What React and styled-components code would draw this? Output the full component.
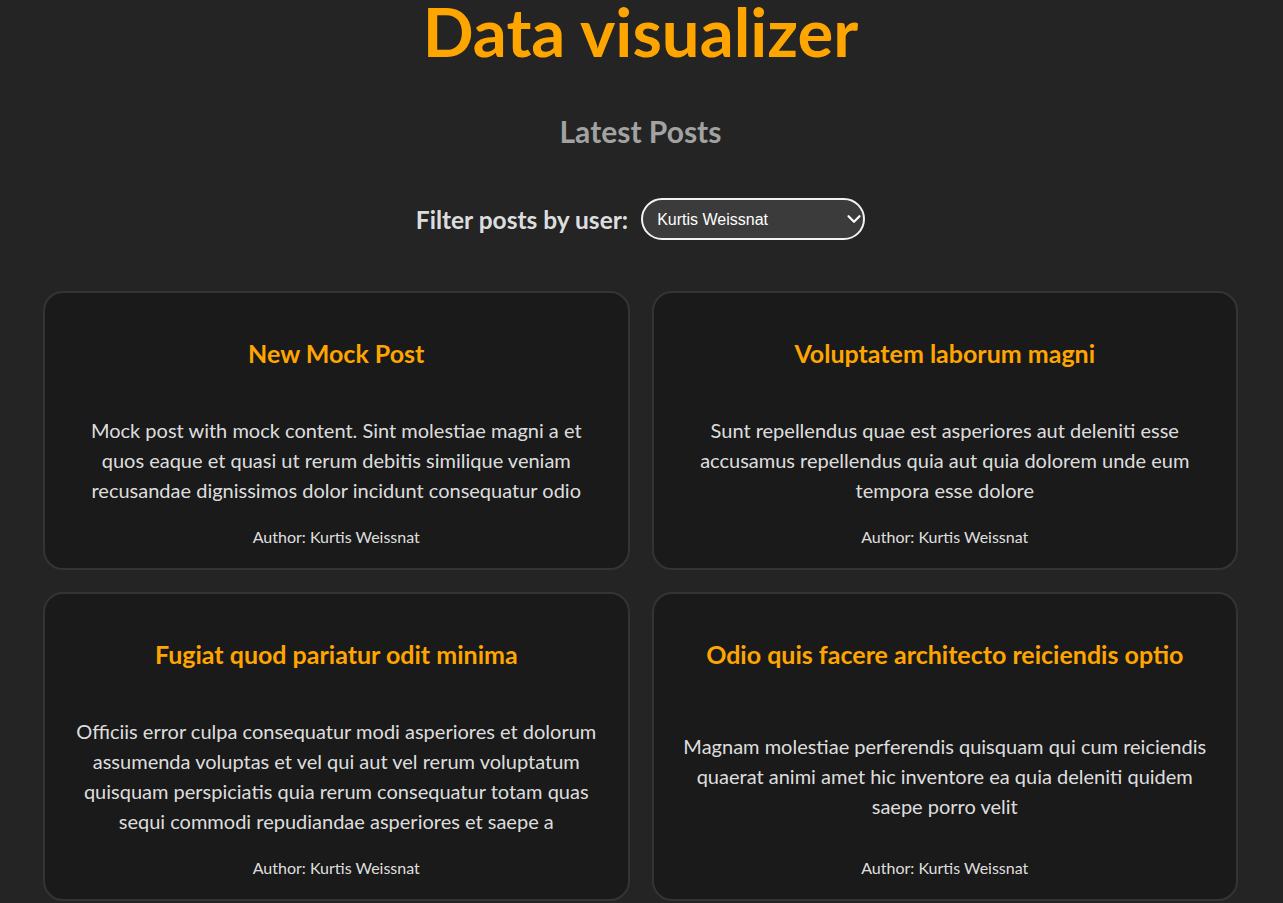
import React, { useState } from "react";
import styled, { createGlobalStyle } from "styled-components";
import { ChevronDown } from "lucide-react";

const GlobalStyle = createGlobalStyle`
  body {
    margin: 0;
    background-color: #242424;
    color: rgba(255, 255, 255, 0.87);
    font-family: Lato, "Open Sans", sans-serif;
  }
`;

const users = [
  "All users",
  "Kurtis Weissnat",
  "Leanne Graham",
  "Ervin Howell",
  "Clementine Bauch",
  "Patricia Lebsack",
];

const posts = [
  {
    id: 1,
    title: "New Mock Post",
    body:
      "Mock post with mock content. Sint molestiae magni a et quos eaque et quasi ut rerum debitis similique veniam recusandae dignissimos dolor incidunt consequatur odio",
    author: "Kurtis Weissnat",
  },
  {
    id: 2,
    title: "Voluptatem laborum magni",
    body:
      "Sunt repellendus quae est asperiores aut deleniti esse accusamus repellendus quia aut quia dolorem unde eum tempora esse dolore",
    author: "Kurtis Weissnat",
  },
  {
    id: 3,
    title: "Fugiat quod pariatur odit minima",
    body:
      "Officiis error culpa consequatur modi asperiores et dolorum assumenda voluptas et vel qui aut vel rerum voluptatum quisquam perspiciatis quia rerum consequatur totam quas sequi commodi repudiandae asperiores et saepe a",
    author: "Kurtis Weissnat",
  },
  {
    id: 4,
    title: "Odio quis facere architecto reiciendis optio",
    body:
      "Magnam molestiae perferendis quisquam qui cum reiciendis quaerat animi amet hic inventore ea quia deleniti quidem saepe porro velit",
    author: "Kurtis Weissnat",
  },
];

const Page = styled.main`
  display: flex;
  flex-direction: column;
  align-items: center;
  padding: 0 45px 0 43px;
  text-align: center;
`;

const Title = styled.h1`
  margin: 0;
  font-size: 67px;
  line-height: 62px;
  font-weight: 700;
  color: #ffa500;
`;

const Subtitle = styled.h2`
  margin: 51px 0 0;
  font-size: 30px;
  line-height: 36px;
  font-weight: 700;
  color: #a2a2a2;
`;

const FilterRow = styled.div`
  display: flex;
  align-items: center;
  gap: 13px;
  margin-top: 49px;
`;

const FilterLabel = styled.label`
  font-size: 24.5px;
  font-weight: 700;
  color: rgba(255, 255, 255, 0.87);
`;

const SelectWrap = styled.div`
  position: relative;
`;

const Select = styled.select`
  appearance: none;
  box-sizing: border-box;
  width: 224px;
  height: 42px;
  padding: 0 30px 0 14px;
  border: 2px solid #f2f2f2;
  border-radius: 21px;
  background: #3b3b3b;
  color: #fff;
  font-family: "Liberation Sans", Arial, sans-serif;
  font-size: 16px;
  outline: none;
`;

const Chevron = styled(ChevronDown)`
  position: absolute;
  right: 0;
  top: 50%;
  transform: translateY(-50%);
  color: #fff;
  pointer-events: none;
`;

const Grid = styled.section`
  display: grid;
  grid-template-columns: repeat(2, 1fr);
  gap: 22px;
  width: 100%;
  margin-top: 51px;
`;

const Card = styled.article`
  display: flex;
  flex-direction: column;
  justify-content: space-between;
  padding: 0 28px;
  background: #1a1a1a;
  border: 2px solid #343434;
  border-radius: 20px;
`;

const PostTitle = styled.h3`
  margin: 45px 0 0;
  font-size: 25px;
  line-height: 30px;
  font-weight: 700;
  color: #ffa500;
`;

const PostBody = styled.p`
  margin: 47px 0 0;
  font-size: 20px;
  line-height: 30px;
  color: rgba(255, 255, 255, 0.87);
`;

const PostAuthor = styled.p`
  margin: 20px 0 19px;
  font-size: 16px;
  line-height: 24px;
  color: rgba(255, 255, 255, 0.87);
`;

export default function App() {
  const [user, setUser] = useState("Kurtis Weissnat");
  const visible = user === "All users" ? posts : posts.filter((p) => p.author === user);

  return (
    <>
      <GlobalStyle />
      <Page>
        <Title>Data visualizer</Title>
        <Subtitle>Latest Posts</Subtitle>
        <FilterRow>
          <FilterLabel htmlFor="user-filter">Filter posts by user:</FilterLabel>
          <SelectWrap>
            <Select id="user-filter" value={user} onChange={(e) => setUser(e.target.value)}>
              {users.map((u) => (
                <option key={u} value={u}>
                  {u}
                </option>
              ))}
            </Select>
            <Chevron size={22} strokeWidth={2.4} />
          </SelectWrap>
        </FilterRow>
        <Grid>
          {visible.map((post) => (
            <Card key={post.id}>
              <PostTitle>{post.title}</PostTitle>
              <PostBody>{post.body}</PostBody>
              <PostAuthor>Author: {post.author}</PostAuthor>
            </Card>
          ))}
        </Grid>
      </Page>
    </>
  );
}
